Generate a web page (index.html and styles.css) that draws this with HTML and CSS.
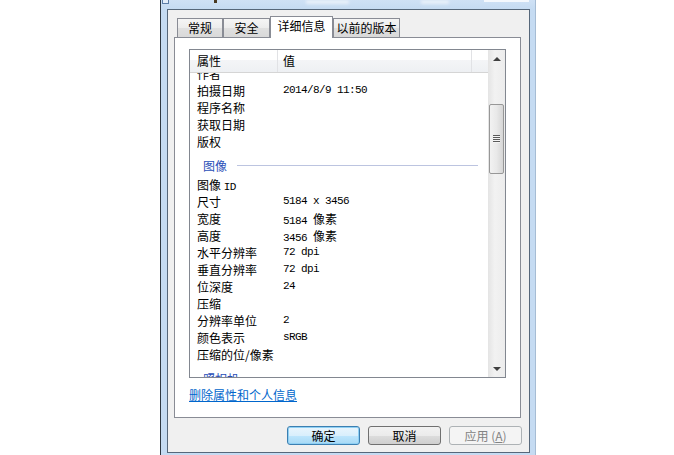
FILE: index.html
```html
<!DOCTYPE html>
<html lang="zh-CN">
<head>
    <meta charset="UTF-8">
    <title>属性 - 详细信息</title>
    <link rel="stylesheet" href="styles.css">
</head>
<body>

    <div class="window">
        <div class="titlebar">
            <span class="t-icon"></span>
            <span class="t-mark"></span>
            <span class="t-glow t-glow-a"></span>
            <span class="t-glow t-glow-b"></span>
            <span class="t-btns"></span>
        </div>

        <div class="client">
            <div class="tabs">
                <div class="tab tab-general">常规</div>
                <div class="tab tab-security">安全</div>
                <div class="tab tab-details active">详细信息</div>
                <div class="tab tab-previous">以前的版本</div>
            </div>

            <div class="panel">
                <div class="listview">
                    <div class="lv-main">
                        <div class="lv-head">
                            <div class="hcell c-name">属性</div>
                            <div class="hcell c-val">值</div>
                            <div class="hcell c-rest"></div>
                        </div>
                        <div class="lv-body">
                            <div class="lv-rows">
                                <div class="row"><span class="name">作者</span><span class="val"></span></div>
                                <div class="row"><span class="name">拍摄日期</span><span class="val">2014/8/9 11:50</span></div>
                                <div class="row"><span class="name">程序名称</span><span class="val"></span></div>
                                <div class="row"><span class="name">获取日期</span><span class="val"></span></div>
                                <div class="row"><span class="name">版权</span><span class="val"></span></div>

                                <div class="group"><span class="group-title">图像</span><span class="group-line"></span></div>
                                <div class="row"><span class="name">图像 <span class="ascii">ID</span></span><span class="val"></span></div>
                                <div class="row"><span class="name">尺寸</span><span class="val">5184 x 3456</span></div>
                                <div class="row"><span class="name">宽度</span><span class="val">5184 <span class="cjk">像素</span></span></div>
                                <div class="row"><span class="name">高度</span><span class="val">3456 <span class="cjk">像素</span></span></div>
                                <div class="row"><span class="name">水平分辨率</span><span class="val">72 dpi</span></div>
                                <div class="row"><span class="name">垂直分辨率</span><span class="val">72 dpi</span></div>
                                <div class="row"><span class="name">位深度</span><span class="val">24</span></div>
                                <div class="row"><span class="name">压缩</span><span class="val"></span></div>
                                <div class="row"><span class="name">分辨率单位</span><span class="val">2</span></div>
                                <div class="row"><span class="name">颜色表示</span><span class="val">sRGB</span></div>
                                <div class="row"><span class="name">压缩的位/像素</span><span class="val"></span></div>

                                <div class="group"><span class="group-title">照相机</span><span class="group-line"></span></div>
                                <div class="row"><span class="name">照相机制造商</span><span class="val"></span></div>
                            </div>
                        </div>
                    </div>
                    <div class="vscroll">
                        <div class="sb-btn"><span class="arr-up"></span></div>
                        <div class="sb-track">
                            <div class="sb-thumb"><span class="grip"></span></div>
                        </div>
                        <div class="sb-btn"><span class="arr-down"></span></div>
                    </div>
                </div>
                <a class="remove-link" href="#">删除属性和个人信息</a>
            </div>

            <div class="buttons">
                <button class="btn btn-default">确定</button>
                <button class="btn">取消</button>
                <button class="btn btn-disabled" disabled>应用 (<u>A</u>)</button>
            </div>
        </div>
    </div>

</body>
</html>
```

FILE: styles.css
```css
/* Win7 file properties dialog, "详细信息" tab */
html, body { margin: 0; padding: 0; background: #fff; }
body { width: 674px; height: 455px; overflow: hidden; font-family: "Noto Sans CJK SC", "Liberation Sans", sans-serif; font-size: 12px; color: #000; }

.window { margin-left: 160px; width: 376px; height: 455px; box-sizing: border-box; border-left: 1px solid #2f3842; border-right: 1px solid #a6bcd4; background: #c5dbf2; padding: 0 5px 2px 6px; display: flex; flex-direction: column; }

.titlebar { height: 9px; margin: 0 -5px 0 -6px; display: flex; align-items: flex-start; background: linear-gradient(#cfe1f5, #c5dbf2); }
.t-icon { margin-left: 1px; width: 5px; height: 3px; border: 1px solid #5d7ea8; border-top: none; background: #e4eefa; }
.t-mark { margin-left: 45px; width: 3px; height: 3px; background: #4a3a22; }
.t-glow { height: 4px; background: #e8f0fa; filter: blur(1.5px); }
.t-glow-a { margin-left: 89px; width: 43px; }
.t-glow-b { margin-left: 72px; width: 28px; }
.t-btns { margin-left: 35px; width: 45px; height: 2px; background: #f4f8fd; }

.client { flex: 1; border: 1px solid #56677a; background: #f0f0f0; display: flex; flex-direction: column; }

/* tab strip */
.tabs { height: 27px; margin: 0 8px 0 6px; padding-left: 3px; display: flex; align-items: flex-end; }
.tab { height: 19px; box-sizing: border-box; border: 1px solid #898c95; border-bottom: none; background: linear-gradient(#f5f5f5, #ececec 50%, #e0e0e0 50%, #d9d9d9); text-align: center; line-height: 18px; }
.tab-general { width: 46px; }
.tab-security { width: 47px; }
.tab-details { width: 63px; }
.tab-previous { width: 67px; }
.tab.active { height: 22px; margin-bottom: -1px; background: #fff; position: relative; z-index: 1; line-height: 18px; }

/* tab page */
.panel { height: 381px; box-sizing: border-box; margin: 0 8px 0 6px; border: 1px solid #898c95; background: #fff; padding: 11px 13px 0 14px; }

.listview { width: 317px; height: 329px; box-sizing: border-box; border: 1px solid #828790; display: flex; }
.lv-main { flex: 1; display: flex; flex-direction: column; min-width: 0; }

.lv-head { height: 23px; box-sizing: border-box; display: flex; border-bottom: 1px solid #d5d5d5; background: linear-gradient(#fff 0, #fff 45%, #f4f5f7 45%, #eef0f3 100%); }
.hcell { box-sizing: border-box; line-height: 22px; }
.c-name { width: 88px; padding-left: 7px; border-right: 1px solid #e1e2e5; }
.c-val { width: 194px; padding-left: 5px; border-right: 1px solid #e1e2e5; }
.c-rest { flex: 1; }

.lv-body { flex: 1; overflow: hidden; }
.lv-rows { margin-top: -8px; }
.row { height: 17px; line-height: 17px; display: flex; white-space: nowrap; }
.name { width: 93px; padding-left: 7px; box-sizing: border-box; }
.val { font-family: "Liberation Mono", "Noto Sans CJK SC", monospace; font-size: 11px; letter-spacing: -0.6px; }
.ascii { font-family: "Liberation Mono", monospace; font-size: 11px; letter-spacing: -0.6px; }
.cjk { font-family: "Noto Sans CJK SC", sans-serif; font-size: 12px; letter-spacing: 0; }

.group { height: 26px; box-sizing: border-box; padding: 5px 10px 0 13px; display: flex; align-items: center; }
.group-title { line-height: 16px; color: #2a4fb8; }
.group-line { flex: 1; margin-left: 10px; border-top: 1px solid #bcc4e0; }

/* vertical scrollbar */
.vscroll { width: 17px; display: flex; flex-direction: column; background: linear-gradient(to right, #e4e4e4, #f2f2f2 40%, #ececec); }
.sb-btn { height: 17px; display: flex; align-items: center; justify-content: center; }
.arr-up { width: 0; height: 0; border-left: 4px solid transparent; border-right: 4px solid transparent; border-bottom: 4px solid #404040; }
.arr-down { width: 0; height: 0; border-left: 4px solid transparent; border-right: 4px solid transparent; border-top: 4px solid #404040; }
.sb-track { flex: 1; }
.sb-thumb { margin: 37px 0 0 1px; width: 15px; height: 70px; box-sizing: border-box; border: 1px solid #979797; border-radius: 2px; background: linear-gradient(to right, #f2f2f2, #e9e9e9 50%, #d6d6d6); display: flex; align-items: center; justify-content: center; }
.grip { width: 7px; height: 8px; background: repeating-linear-gradient(#5a5a5a 0 1px, #f4f4f4 1px 2px); }

.remove-link { display: inline-block; margin-top: 8px; line-height: 18px; color: #0066cc; text-decoration: underline; }

/* dialog buttons */
.buttons { margin: 8px 7px 0 0; display: flex; justify-content: flex-end; gap: 8px; }
.btn { width: 73px; height: 19px; padding: 0; box-sizing: border-box; border: 1px solid #707070; border-radius: 3px; background: linear-gradient(#f2f2f2, #ebebeb 50%, #dddddd 50%, #cfcfcf); font-family: "Noto Sans CJK SC", sans-serif; font-size: 12px; line-height: 17px; color: #000; }
.btn-default { border-color: #3c7fb1; background: linear-gradient(#e9f5fd, #d9effc 50%, #bee6fd 50%, #a7d9f5); box-shadow: inset 0 0 0 1px #8fd0f4; }
.btn-disabled { border-color: #adb2b5; background: #f4f4f4; color: #838383; }
```
